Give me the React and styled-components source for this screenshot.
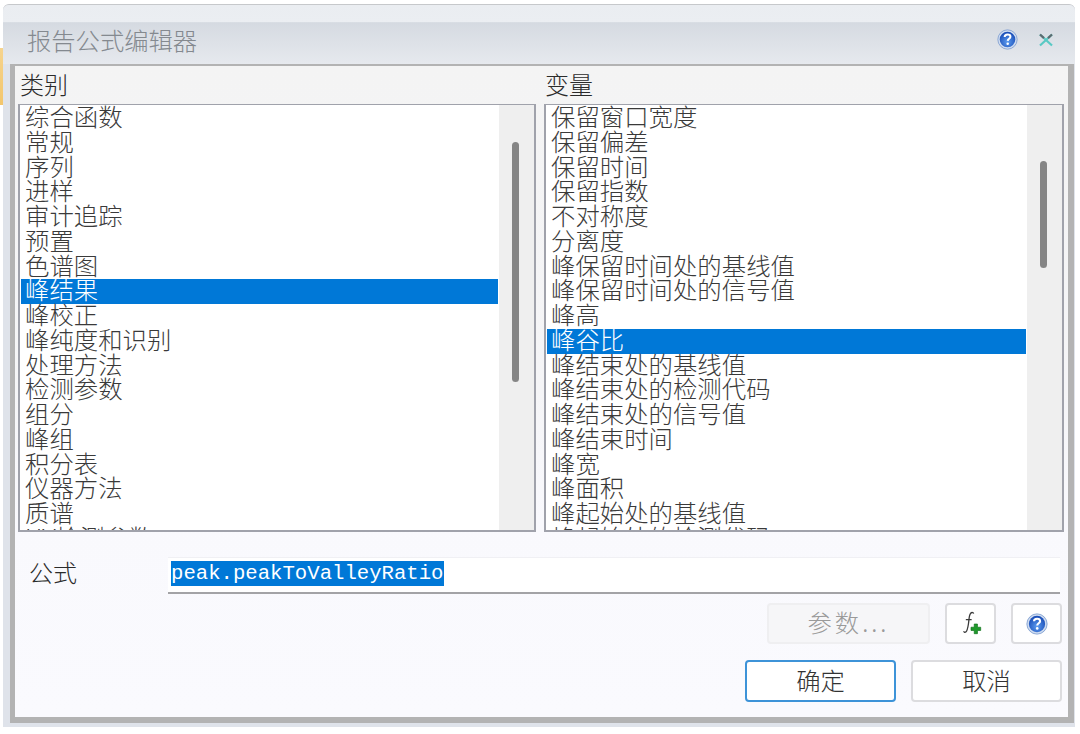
import styled, { createGlobalStyle } from "styled-components";

const cjk = `"Noto Sans CJK SC", "Liberation Serif", serif`;

const categories = [
  "综合函数", "常规", "序列", "进样", "审计追踪", "预置", "色谱图", "峰结果", "峰校正",
  "峰纯度和识别", "处理方法", "检测参数", "组分", "峰组", "积分表", "仪器方法", "质谱", "UV检测参数",
];

const variables = [
  "保留窗口宽度", "保留偏差", "保留时间", "保留指数", "不对称度", "分离度", "峰保留时间处的基线值",
  "峰保留时间处的信号值", "峰高", "峰谷比", "峰结束处的基线值", "峰结束处的检测代码", "峰结束处的信号值",
  "峰结束时间", "峰宽", "峰面积", "峰起始处的基线值", "峰起始处的检测代码",
];

const GlobalStyle = createGlobalStyle`
  html, body {
    margin: 0;
    background: #fff;
  }
  body {
    font-family: ${cjk};
    width: 1080px;
    height: 734px;
    overflow: hidden;
  }
`;

const Page = styled.div`
  display: flex;
  align-items: flex-start;
  height: 734px;
  padding-top: 4px;
  box-sizing: border-box;
`;

const Sliver = styled.div`
  width: 3px;
  height: 57px;
  margin-top: 44px;
  background: linear-gradient(#f6d48e, #f3c66c);
`;

const Window = styled.div`
  width: 1072px;
  height: 723px;
  display: flex;
  flex-direction: column;
  background: #dfe3ea;
  border-top: 1px solid #c6c8cb;
  border-radius: 6px 6px 0 0;
  box-sizing: border-box;
`;

const TitleBar = styled.div`
  height: 59px;
  flex: none;
  display: flex;
  align-items: center;
  padding: 10px 19px 0 24px;
  box-sizing: border-box;
  border-radius: 6px 6px 0 0;
  background: linear-gradient(#eaedf1 0, #ebeef2 28%, #d5dae1 30%, #e6e9ee 100%);
`;

const Title = styled.div`
  flex: 1;
  font-size: 24.3px;
  font-weight: 300;
  line-height: 30px;
  color: #84898f;
`;

const CloseMark = styled.svg`
  width: 16px;
  height: 16px;
  margin-left: 20px;
  margin-right: 2px;
`;

const Body = styled.div`
  flex: 1;
  margin: 0 1px 4px 7px;
  border: solid #b3b3b3;
  border-width: 2px 6px 6px 5px;
  padding: 0 4px 0 3px;
  display: flex;
  flex-direction: column;
  background: linear-gradient(#f4f4f4 0, #f5f5f7 50%, #f9f9fd 70%, #fafafe 100%);
`;

const Columns = styled.div`
  display: flex;
  gap: 8px;
`;

const Column = styled.div`
  width: ${(p) => p.$width}px;
  flex: none;
`;

const ColumnLabel = styled.div`
  height: 38px;
  line-height: 35px;
  padding-left: ${(p) => p.$indent}px;
  font-size: 24px;
  font-weight: 300;
  color: #2b2b2b;
`;

const ListBox = styled.div`
  height: 428px;
  box-sizing: border-box;
  border: 2px solid #a0a2ab;
  border-top-width: 1px;
  background: #fff;
  display: flex;
  overflow: hidden;
`;

const Rows = styled.div`
  flex: 1;
  min-width: 0;
  padding: 1px 1px 0 1px;
  overflow: hidden;
`;

const Row = styled.div`
  height: 24.75px;
  line-height: 20px;
  padding-left: 4px;
  font-size: 24.4px;
  font-weight: 300;
  white-space: nowrap;
  color: ${(p) => (p.$selected ? "#fff" : "#3a3a3a")};
  background: ${(p) => (p.$selected ? "#0078d7" : "transparent")};
`;

const ScrollTrack = styled.div`
  width: 35px;
  flex: none;
  padding-top: ${(p) => p.$top}px;
  padding-left: 13px;
  box-sizing: border-box;
  background: #efefef;
`;

const ScrollThumb = styled.div`
  width: 7px;
  height: ${(p) => p.$height}px;
  border-radius: 4px;
  background: #858585;
`;

const FormulaRow = styled.div`
  display: flex;
  align-items: flex-start;
  margin-top: 25px;
  height: 37px;
`;

const FormulaLabel = styled.div`
  width: 150px;
  box-sizing: border-box;
  padding-left: 11px;
  flex: none;
  font-size: 24px;
  font-weight: 300;
  line-height: 30px;
  color: #2b2b2b;
`;

const FormulaInput = styled.div`
  width: 892px;
  height: 37px;
  box-sizing: border-box;
  padding: 2px 0 0 3px;
  background: #fff;
  border-bottom: 2px solid #a3a3a6;
  border-top: 1px solid #f0f0f4;
`;

const FormulaText = styled.span`
  display: inline-block;
  height: 25px;
  line-height: 25px;
  font-family: "Liberation Mono", ${cjk};
  font-size: 20.65px;
  color: #fff;
  background: #0078d7;
`;

const ButtonRow = styled.div`
  display: flex;
  justify-content: flex-end;
  gap: ${(p) => p.$gap}px;
  margin-top: ${(p) => p.$top}px;
  padding-right: 2px;
`;

const Button = styled.div`
  width: ${(p) => p.$width}px;
  height: ${(p) => p.$height}px;
  box-sizing: border-box;
  display: flex;
  align-items: center;
  justify-content: center;
  padding-bottom: ${(p) => (p.$icon ? 0 : 4)}px;
  font-size: 24.3px;
  font-weight: 300;
  letter-spacing: ${(p) => p.$spacing || 0}px;
  border-radius: 4px;
  color: ${(p) => (p.$disabled ? "#9a9a9a" : "#333")};
  background: ${(p) => (p.$disabled ? "#f6f6f8" : "#fff")};
  border: ${(p) =>
    p.$primary ? "2px solid #3d93d8" : p.$disabled ? "2px solid #efeff1" : "2px solid #dcdcdf"};
`;

const HelpSvg = styled.svg`
  width: ${(p) => p.$size}px;
  height: ${(p) => p.$size}px;
`;

function HelpIcon({ size }) {
  return (
    <HelpSvg $size={size} viewBox="0 0 20 20">
      <defs>
        <radialGradient id="helpFill" cx="50%" cy="65%" r="60%">
          <stop offset="0" stopColor="#5d9cf0" />
          <stop offset="1" stopColor="#1b4fb8" />
        </radialGradient>
      </defs>
      <circle cx="10" cy="10" r="9.2" fill="#cfdcf0" stroke="#7f9fd0" strokeWidth="0.8" />
      <circle cx="10" cy="10" r="7.4" fill="url(#helpFill)" />
      <path
        d="M7.3 7.6c0-1.6 1.2-2.4 2.8-2.4s2.7.9 2.7 2.2c0 1.9-2.5 2-2.6 3.9"
        fill="none"
        stroke="#fff"
        strokeWidth="1.9"
      />
      <circle cx="10.2" cy="14" r="1.2" fill="#fff" />
    </HelpSvg>
  );
}

function FunctionIcon() {
  return (
    <svg width="24" height="28" viewBox="0 0 22 26">
      <path
        d="M10.5 3.2c1.3-1.4 3-.9 2.8.2M10.6 3.2C9 5 9.3 9 8.6 13c-.5 3.4-1 6.4-2.4 7.4-1 .6-2 0-1.8-.7M6.2 9h5.4"
        fill="none"
        stroke="#3a3a3a"
        strokeWidth="1.2"
      />
      <path d="M14 13h3v3h3v3h-3v3h-3v-3h-3v-3h3z" fill="#1f9a2c" stroke="#0c6f17" strokeWidth="0.6" />
    </svg>
  );
}

export default function App() {
  return (
    <>
      <GlobalStyle />
      <Page>
        <Sliver />
        <Window>
          <TitleBar>
            <Title>报告公式编辑器</Title>
            <HelpIcon size={21} />
            <CloseMark viewBox="0 0 16 16">
              <path d="M2 2.5l12 11" stroke="#58c9c4" strokeWidth="2.2" />
              <path d="M14 2.5l-12 11" stroke="#58c9c4" strokeWidth="2.2" />
              <path d="M2 2.5l4 3.6M14 2.5l-4 3.6" stroke="#5e6b70" strokeWidth="2.2" />
            </CloseMark>
          </TitleBar>
          <Body>
            <Columns>
              <Column $width={518}>
                <ColumnLabel $indent={2}>类别</ColumnLabel>
                <ListBox>
                  <Rows>
                    {categories.map((name) => (
                      <Row key={name} $selected={name === "峰结果"}>
                        {name}
                      </Row>
                    ))}
                  </Rows>
                  <ScrollTrack $top={37}>
                    <ScrollThumb $height={240} />
                  </ScrollTrack>
                </ListBox>
              </Column>
              <Column $width={520}>
                <ColumnLabel $indent={1}>变量</ColumnLabel>
                <ListBox>
                  <Rows>
                    {variables.map((name) => (
                      <Row key={name} $selected={name === "峰谷比"}>
                        {name}
                      </Row>
                    ))}
                  </Rows>
                  <ScrollTrack $top={56}>
                    <ScrollThumb $height={107} />
                  </ScrollTrack>
                </ListBox>
              </Column>
            </Columns>
            <FormulaRow>
              <FormulaLabel>公式</FormulaLabel>
              <FormulaInput>
                <FormulaText>peak.peakToValleyRatio</FormulaText>
              </FormulaInput>
            </FormulaRow>
            <ButtonRow $gap={15} $top={9}>
              <Button $width={163} $height={41} $disabled $spacing={3}>
                参数...
              </Button>
              <Button $width={51} $height={41} $icon>
                <FunctionIcon />
              </Button>
              <Button $width={51} $height={41} $icon>
                <HelpIcon size={22} />
              </Button>
            </ButtonRow>
            <ButtonRow $gap={15} $top={16}>
              <Button $width={151} $height={42} $primary>
                确定
              </Button>
              <Button $width={151} $height={42}>
                取消
              </Button>
            </ButtonRow>
          </Body>
        </Window>
      </Page>
    </>
  );
}
